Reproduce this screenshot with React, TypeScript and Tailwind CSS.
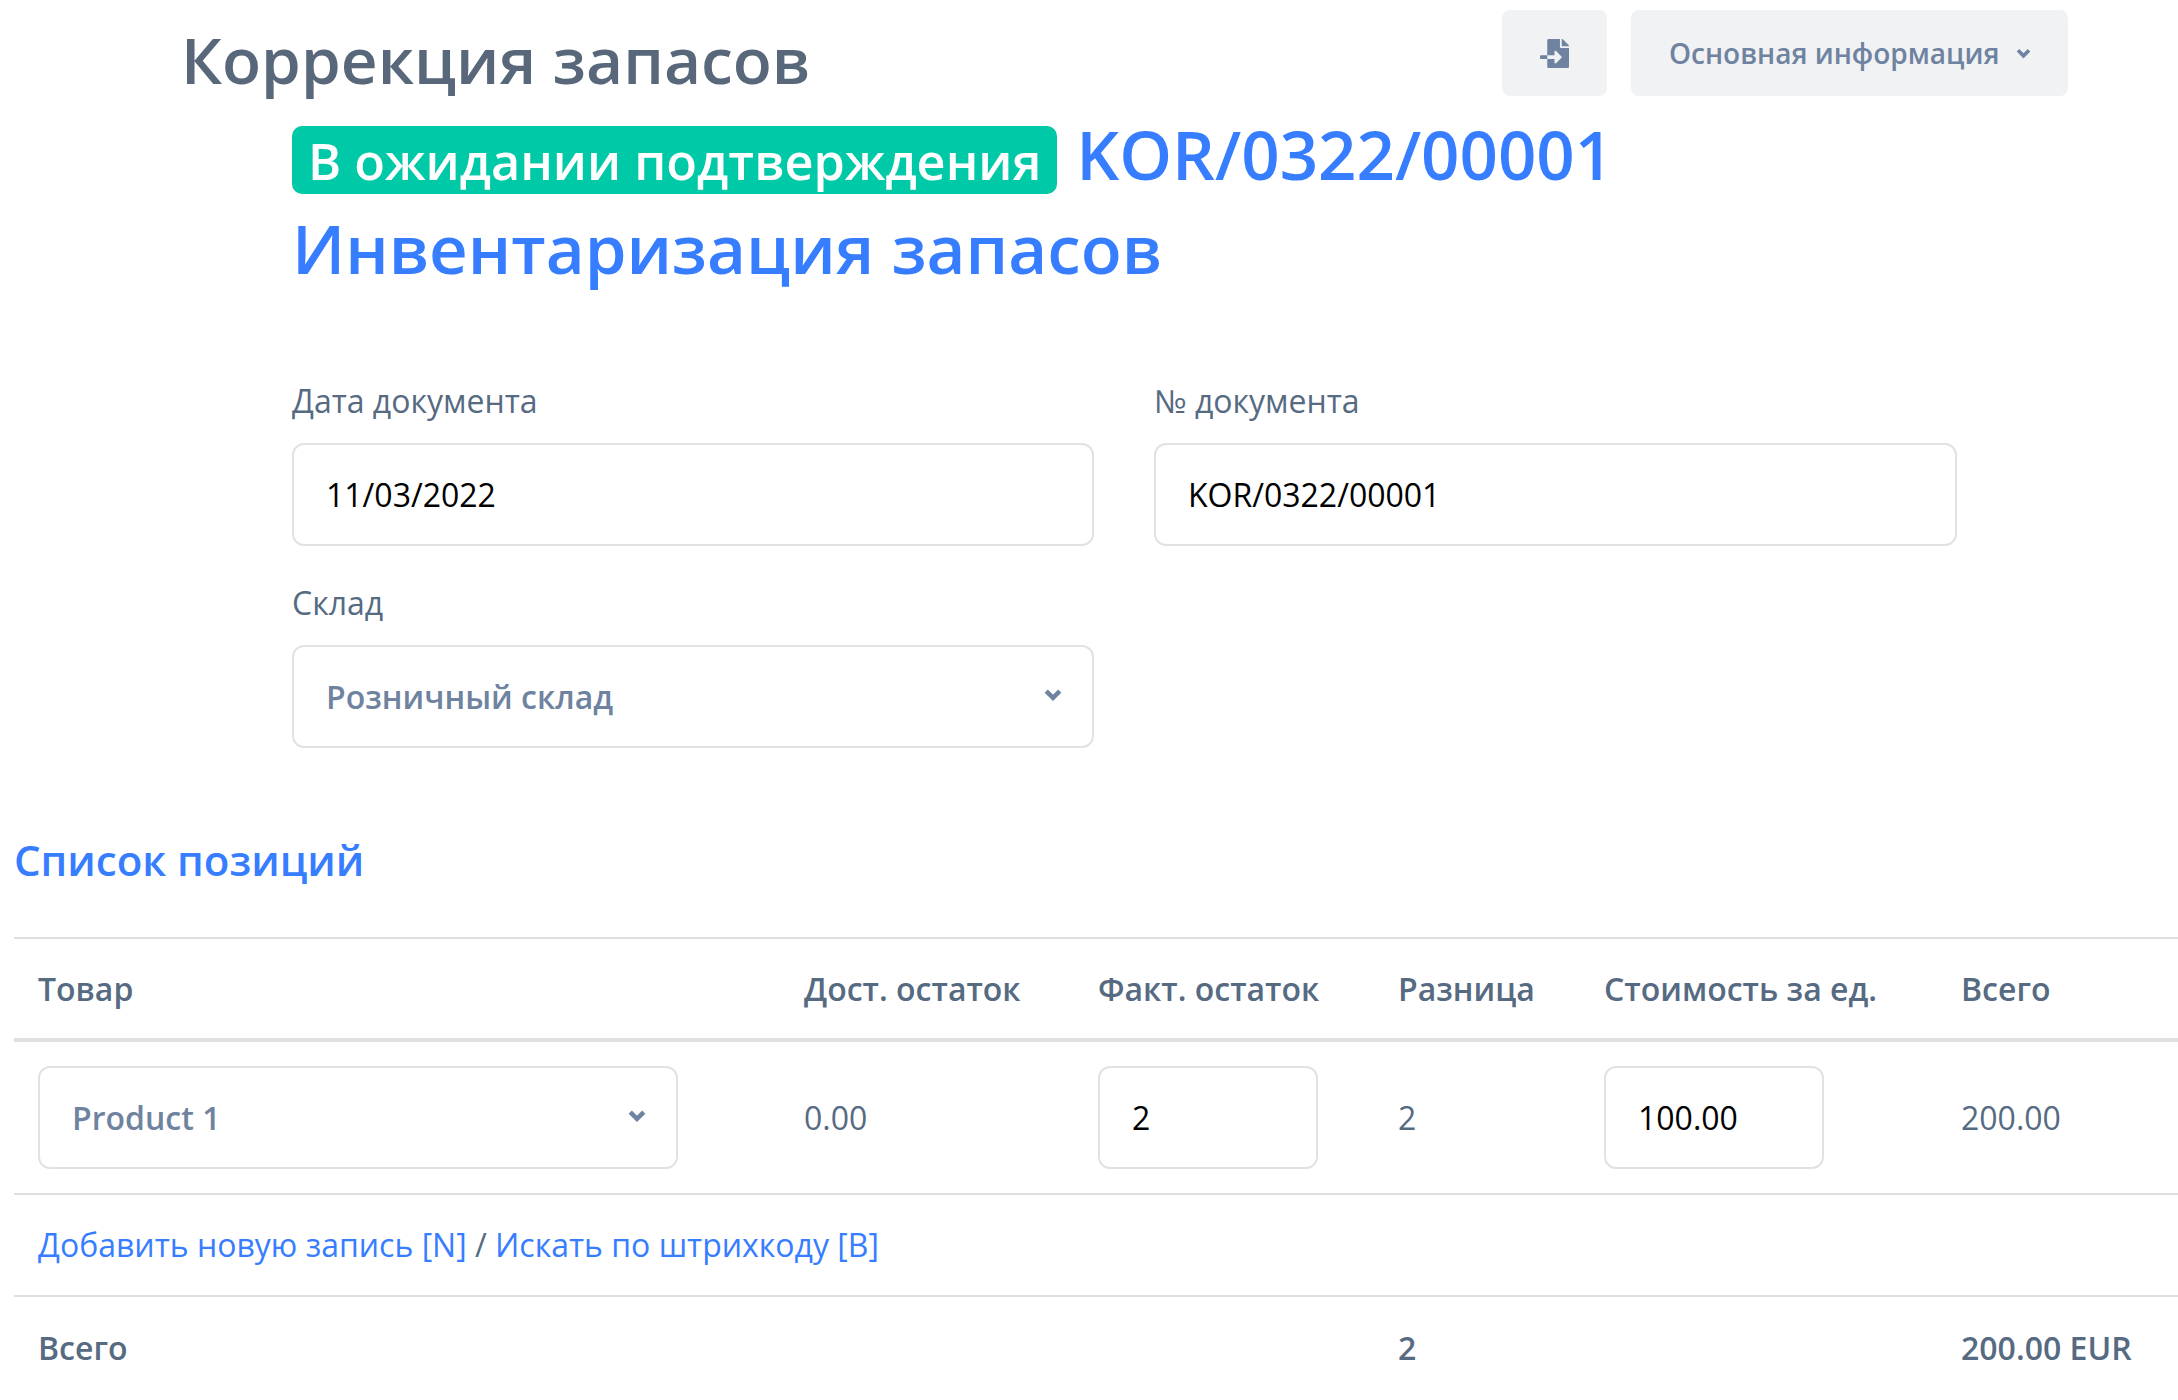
import { FaFileImport } from "react-icons/fa";

function Chevron({ className }: { className: string }) {
  return (
    <svg viewBox="0 0 16 12" className={className} fill="none" stroke="currentColor" strokeWidth="4">
      <path d="M2 2.5 8 8.5 14 2.5" />
    </svg>
  );
}

function Field({ label, value, className }: { label: string; value: string; className?: string }) {
  return (
    <div className={className}>
      <label className="block text-[32px] leading-[48px] text-[#566a82] mb-[18px]">{label}</label>
      <input
        readOnly
        value={value}
        className="block w-full h-[103px] border-2 border-[#e2e2e2] rounded-[12px] px-[32px] text-[32px] text-black bg-white outline-none"
      />
    </div>
  );
}

function SelectBox({ value, className }: { value: string; className: string }) {
  return (
    <div className={`flex items-center justify-between h-[103px] border-2 border-[#e2e2e2] rounded-[12px] pl-[32px] pr-[30px] bg-white ${className}`}>
      <span className="text-[32px] font-semibold text-[#6f83a0]">{value}</span>
      <Chevron className="w-[18px] h-[14px] text-[#6f83a0] mb-[4px]" />
    </div>
  );
}

const headers = [
  { label: "Товар", width: "w-[766px]" },
  { label: "Дост. остаток", width: "w-[294px]" },
  { label: "Факт. остаток", width: "w-[300px]" },
  { label: "Разница", width: "w-[206px]" },
  { label: "Стоимость за ед.", width: "w-[357px]" },
  { label: "Всего", width: "w-[241px]" },
];

export default function App() {
  return (
    <div className="w-[2178px] h-[1400px] overflow-hidden bg-white font-['Open_Sans',sans-serif]">
      {/* top bar */}
      <div className="flex items-start justify-between pl-[181px] pr-[110px] pt-[10px] h-[120px]">
        <h1 className="text-[64px] leading-[96px] font-semibold text-[#586779] mt-[2px]">Коррекция запасов</h1>
        <div className="flex gap-[24px]">
          <button className="flex items-center justify-center w-[105px] h-[86px] rounded-[8px] bg-[#f1f2f4] text-[#6f83a0]">
            <FaFileImport className="w-[29px] h-[29px]" />
          </button>
          <button className="flex items-center gap-[16px] h-[86px] w-[437px] pl-[38px] rounded-[8px] bg-[#f1f2f4] text-[28px] font-semibold text-[#6f83a0]">
            Основная информация
            <Chevron className="w-[15px] h-[11px]" />
          </button>
        </div>
      </div>

      {/* document heading */}
      <div className="ml-[292px] mr-[20px] text-[67.2px] leading-[96px] font-semibold text-[#377dff]">
        <div className="flex items-center gap-[19px] h-[84px] -mt-[2px]">
          <span className="inline-block h-[68px] leading-[70px] px-[16px] rounded-[10px] bg-[#00c9a7] text-[50.4px] text-white">
            В ожидании подтверждения
          </span>
          <span className="-mt-[12px]">KOR/0322/00001</span>
        </div>
        <div className="-mt-[2px]">Инвентаризация запасов</div>
      </div>

      {/* document form */}
      <div className="ml-[292px] mt-[81px] w-[1665px] grid grid-cols-[802px_803px] gap-x-[60px] gap-y-[33px]">
        <Field label="Дата документа" value="11/03/2022" />
        <Field label="№ документа" value="KOR/0322/00001" />
        <div>
          <label className="block text-[32px] leading-[48px] text-[#566a82] mb-[18px]">Склад</label>
          <SelectBox value="Розничный склад" className="w-full" />
        </div>
      </div>

      {/* items */}
      <h2 className="ml-[14px] mt-[80px] text-[42px] leading-[63px] font-semibold text-[#377dff]">Список позиций</h2>
      <table className="ml-[14px] mt-[46px] w-[2164px] table-fixed text-[32px] text-[#566a82]">
        <thead>
          <tr className="h-[102px] border-t-2 border-b-4 border-[#e0e0e0]">
            {headers.map((h) => (
              <th key={h.label} className={`${h.width} pl-[24px] text-left font-semibold`}>
                {h.label}
              </th>
            ))}
          </tr>
        </thead>
        <tbody>
          <tr className="h-[154px] border-b-2 border-[#e0e0e0]">
            <td className="pl-[24px]">
              <SelectBox value="Product 1" className="w-[640px]" />
            </td>
            <td className="pl-[24px]">0.00</td>
            <td className="pl-[24px]">
              <input readOnly value="2" className="block w-[220px] h-[103px] border-2 border-[#e2e2e2] rounded-[12px] px-[32px] text-black outline-none" />
            </td>
            <td className="pl-[24px]">2</td>
            <td className="pl-[24px]">
              <input readOnly value="100.00" className="block w-[220px] h-[103px] border-2 border-[#e2e2e2] rounded-[12px] px-[32px] text-black outline-none" />
            </td>
            <td className="pl-[24px]">200.00</td>
          </tr>
          <tr className="h-[102px] border-b-2 border-[#e0e0e0]">
            <td colSpan={6} className="pl-[24px]">
              <a className="text-[#377dff]">Добавить новую запись [N]</a> / <a className="text-[#377dff]">Искать по штрихкоду [B]</a>
            </td>
          </tr>
          <tr className="h-[102px] font-semibold">
            <td className="pl-[24px]">Всего</td>
            <td />
            <td />
            <td className="pl-[24px]">2</td>
            <td />
            <td className="pl-[24px]">200.00 EUR</td>
          </tr>
        </tbody>
      </table>
    </div>
  );
}
